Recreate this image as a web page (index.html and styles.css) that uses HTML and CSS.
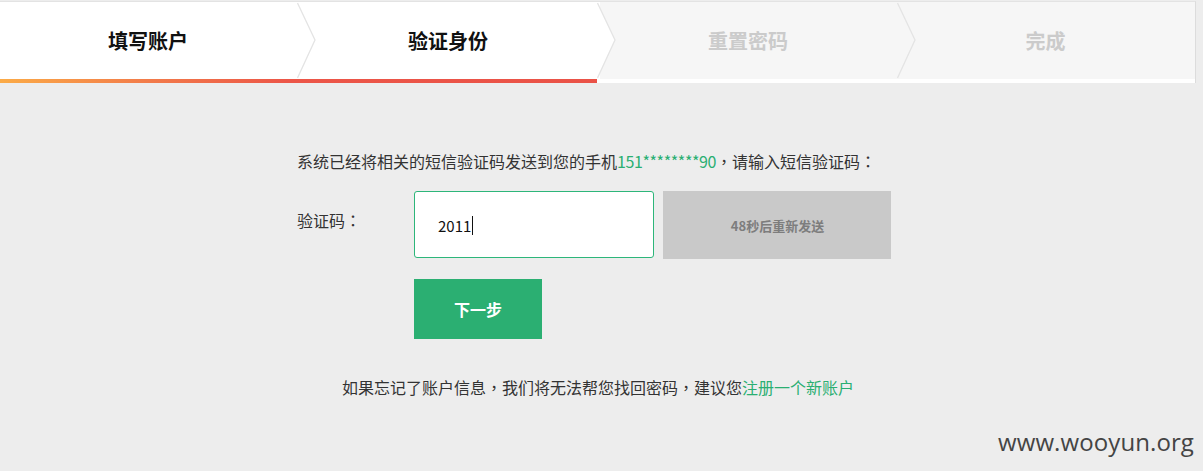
FILE: index.html
```html
<!DOCTYPE html>
<html lang="zh-CN">
<head>
<meta charset="utf-8">
<title>找回密码 - 验证身份</title>
<link rel="stylesheet" href="styles.css">
</head>
<body>
<div class="page">
  <div class="steps-wrap">
    <div class="steps">
      <div class="step step-done">
        <span class="step-text">填写账户</span>
        <svg class="chevron" width="20" height="77" viewBox="0 0 20 77"><polygon points="0,0 18,38 0,77" fill="#ffffff"/><polyline points="0.5,1 18,38 0.5,76" fill="none" stroke="#e4e4e4" stroke-width="1.3"/></svg>
      </div>
      <div class="step step-active">
        <span class="step-text">验证身份</span>
        <svg class="chevron" width="20" height="77" viewBox="0 0 20 77"><polygon points="0,0 18,38 0,77" fill="#ffffff"/><polyline points="0.5,1 18,38 0.5,76" fill="none" stroke="#e4e4e4" stroke-width="1.3"/></svg>
      </div>
      <div class="step step-todo">
        <span class="step-text">重置密码</span>
        <svg class="chevron" width="20" height="77" viewBox="0 0 20 77"><polygon points="0,0 18,38 0,77" fill="#f6f6f6"/><polyline points="0.5,1 18,38 0.5,76" fill="none" stroke="#e4e4e4" stroke-width="1.3"/></svg>
      </div>
      <div class="step step-todo step-last">
        <span class="step-text">完成</span>
      </div>
    </div>
    <div class="bar">
      <div class="bar-fill"></div>
    </div>
  </div>

  <div class="form">
    <p class="msg">系统已经将相关的短信验证码发送到您的手机<span class="green num">151********90</span><span class="punct" lang="zh-TW">，</span>请输入短信验证码<span class="punct" lang="zh-TW">：</span></p>
    <div class="row">
      <label class="label">验证码<span class="punct" lang="zh-TW">：</span></label>
      <div class="input"><span class="val">2011</span><span class="caret"></span></div>
      <div class="resend">48秒后重新发送</div>
    </div>
    <div class="next-row">
      <div class="next">下一步</div>
    </div>
  </div>

  <p class="tip">如果忘记了账户信息<span class="punct" lang="zh-TW">，</span>我们将无法帮您找回密码<span class="punct" lang="zh-TW">，</span>建议您<span class="green">注册一个新账户</span></p>

  <div class="watermark">www.wooyun.org</div>
</div>
</body>
</html>
```

FILE: styles.css
```css
html, body {
  margin: 0;
  padding: 0;
}
body {
  background: #ededed;
  font-family: "Noto Sans CJK SC", "Noto Sans", sans-serif;
  color: #333;
  width: 1203px;
  height: 471px;
  overflow: hidden;
}
.page {
  position: relative;
  width: 1203px;
  height: 471px;
}
.steps-wrap {
  width: 1196px;
  margin-top: 1px;
  border-top: 1px solid #e3e3e3;
  border-right: 1px solid #dcdcdc;
  box-sizing: border-box;
  background: #fff;
}
.steps {
  display: flex;
  height: 77px;
}
.step {
  position: relative;
  flex: 0 0 300px;
  display: flex;
  align-items: center;
  justify-content: center;
  font-size: 20px;
  font-weight: bold;
}
.step-last {
  flex: 1 1 auto;
}
.step-text {
  position: relative;
  left: -2px;
}
.step-done, .step-active {
  background: #fff;
  color: #111;
}
.step-todo {
  background: #f6f6f6;
  color: #cbcbcb;
}
.chevron {
  position: absolute;
  left: 297px;
  top: 0;
  z-index: 2;
}
.bar {
  display: flex;
  height: 4px;
  background: #fff;
}
.bar-fill {
  width: 597px;
  height: 4px;
  background: linear-gradient(to right, #fbab47 0, #f27b4a 25%, #ec5648 48%, #ea5247 100%);
}
.form {
  margin-left: 297px;
  padding-top: 66px;
}
.msg {
  margin: 0;
  font-size: 16px;
  line-height: 24px;
  color: #333;
}
.green {
  color: #2aaf72;
}
.num {
  letter-spacing: -0.4px;
}
.punct {
  display: inline-block;
  width: 1em;
  text-align: center;
  font-family: "Noto Sans CJK TC", "Noto Sans CJK SC", sans-serif;
}
.row {
  display: flex;
  margin-top: 18px;
  align-items: flex-start;
}
.label {
  width: 117px;
  font-size: 16px;
  line-height: 24px;
  padding-top: 17px;
  color: #333;
}
.input {
  width: 240px;
  height: 67px;
  box-sizing: border-box;
  border: 1px solid #2db67a;
  border-radius: 3px;
  background: #fff;
  display: flex;
  align-items: center;
  padding-left: 23px;
  padding-top: 1px;
  font-size: 15px;
  color: #111;
}
.caret {
  display: inline-block;
  width: 1px;
  height: 19px;
  background: #111;
  margin-left: 1px;
}
.resend {
  margin-left: 9px;
  width: 228px;
  height: 68px;
  background: #c9c9c9;
  color: #7d7d7d;
  font-size: 13px;
  font-weight: bold;
  display: flex;
  align-items: center;
  justify-content: center;
  padding-left: 1px;
  padding-top: 1px;
  box-sizing: border-box;
}
.next-row {
  display: flex;
  padding-left: 117px;
  margin-top: 20px;
}
.next {
  width: 128px;
  height: 60px;
  background: #2baf72;
  color: #fff;
  font-size: 16px;
  font-weight: bold;
  display: flex;
  align-items: center;
  justify-content: center;
}
.tip {
  width: 1196px;
  margin: 36px 0 0 0;
  text-align: center;
  font-size: 16px;
  line-height: 24px;
  color: #333;
}
.watermark {
  position: absolute;
  right: 9px;
  top: 424px;
  font-family: "Open Sans", "DejaVu Sans", sans-serif;
  font-size: 24px;
  color: #444;
  letter-spacing: 0.1px;
}
```
